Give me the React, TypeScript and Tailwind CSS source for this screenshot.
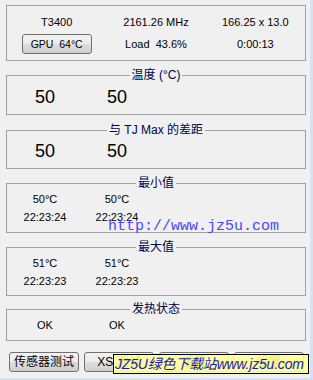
const ui = "font-['Liberation_Sans','Noto_Sans_CJK_SC',sans-serif]";

const btnBase =
  'h-[20px] w-[70px] border border-[#707070] rounded-[3px] bg-[linear-gradient(#f2f2f2_0%,#ebebeb_50%,#dddddd_50%,#cfcfcf_100%)] leading-[18px] text-black text-center';

function Group({ title, children, className }: { title: string; children: React.ReactNode; className: string }) {
  return (
    <fieldset className={`border border-[#a0a0a0] ${className}`}>
      <legend className="mx-auto px-[2px] text-[12px] leading-[14px] text-[#00004d]">{title}</legend>
      {children}
    </fieldset>
  );
}

function Cols({ items, className }: { items: string[]; className: string }) {
  return (
    <div className={`flex pl-[2px] ${className}`}>
      {items.map((t, i) => (
        <div key={i} className="w-[72px] text-center">
          {t}
        </div>
      ))}
    </div>
  );
}

export default function App() {
  return (
    <div className={`relative w-[313px] h-[380px] overflow-hidden bg-[#f0f0f0] border-r-[3px] border-b-[2px] border-[#d4e2f1] ${ui}`}>
      <div className="pt-[5px] pl-[6px] pr-[4px] flex flex-col">
        {/* info */}
        <div className="h-[56px] border border-[#a0a0a0] pt-[6px] text-[11px] text-black">
          <div className="grid grid-cols-3 h-[20px] items-center text-center">
            <span>T3400</span>
            <span>2161.26 MHz</span>
            <span>166.25 x 13.0</span>
          </div>
          <div className="grid grid-cols-3 h-[20px] mt-[2px] items-center text-center">
            <div className="flex justify-center">
              <button className={`${btnBase} text-[10.5px] whitespace-pre`}>GPU  64°C</button>
            </div>
            <span className="whitespace-pre">Load  43.6%</span>
            <span>0:00:13</span>
          </div>
        </div>

        <Group title="温度 (°C)" className="mt-[7px]">
          <Cols items={['50', '50']} className="pt-[5px] pb-[7px] h-[32px] text-[18px] leading-[20px] text-black" />
        </Group>

        <Group title="与 TJ Max 的差距" className="mt-[8px]">
          <Cols items={['50', '50']} className="pt-[4px] pb-[7px] h-[31px] text-[18px] leading-[20px] text-black" />
        </Group>

        <Group title="最小值" className="mt-[7px]">
          <div className="pb-[6px] text-[11px] leading-[18px] text-black">
            <Cols items={['50°C', '50°C']} className="" />
            <Cols items={['22:23:24', '22:23:24']} className="" />
          </div>
        </Group>

        <Group title="最大值" className="mt-[7px]">
          <div className="pb-[5px] text-[11px] leading-[18px] text-black">
            <Cols items={['51°C', '51°C']} className="" />
            <Cols items={['22:23:23', '22:23:23']} className="" />
          </div>
        </Group>

        <Group title="发热状态" className="mt-[6px]">
          <Cols items={['OK', 'OK']} className="pb-[6px] text-[11px] leading-[18px] text-black" />
        </Group>

        <div className="mt-[11px] ml-[3px] flex gap-[5px]">
          <button className={`${btnBase} text-[12px]`}>传感器测试</button>
          <button className={`${btnBase} text-[12px]`}>XS 测试</button>
          <button className={`${btnBase} text-[12px]`}>重置</button>
          <button className={`${btnBase} text-[12px]`}>设置</button>
        </div>
      </div>

      {/* watermarks */}
      <div className="absolute left-[108px] top-[218px] font-['Liberation_Mono',monospace] text-[15px] leading-[18px] text-[#4848ff]">
        http://www.jz5u.com
      </div>
      <div className="absolute left-[113px] top-[354px] w-[196px] h-[20px] border border-black bg-[#ffff99]/90 pl-[1px] text-[14px] leading-[18px] italic tracking-[-0.2px] text-[#1a1ab0] whitespace-nowrap overflow-hidden">
        JZ5U绿色下载站www.jz5u.com
      </div>
    </div>
  );
}
